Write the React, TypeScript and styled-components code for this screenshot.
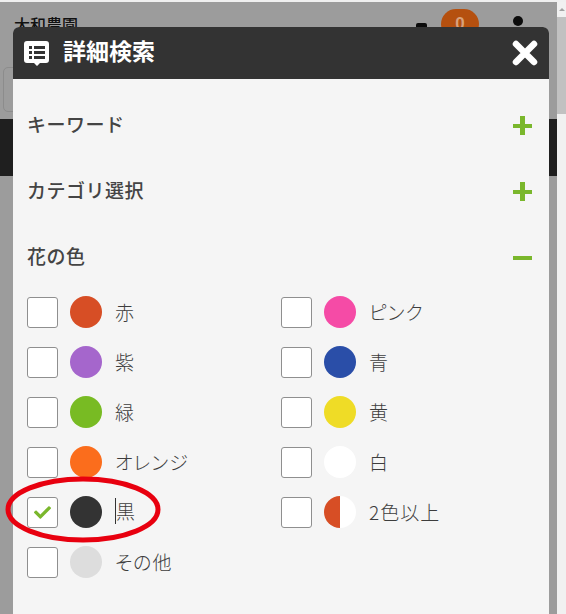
import styled, { createGlobalStyle } from "styled-components";
import { FaCheck } from "react-icons/fa";

const GlobalStyle = createGlobalStyle`
  html, body {
    margin: 0;
    padding: 0;
    overflow: hidden;
    background: #f0f0f0;
  }
  * {
    box-sizing: border-box;
  }
`;

const Page = styled.div`
  position: relative;
  width: 566px;
  height: 614px;
  padding-top: 2px;
  overflow: hidden;
  display: flex;
  font-family: "Noto Sans CJK JP", "Liberation Sans", sans-serif;
`;

const Backdrop = styled.div`
  flex: 1;
  background: #9c9c9c;
`;

const Header = styled.div`
  height: 65px;
  padding: 7px 14px 0;
  display: flex;
  align-items: flex-start;
  justify-content: space-between;
  font-size: 16px;
  font-weight: 500;
  color: #111;
`;

const ShopName = styled.span`
  margin-top: 3px;
`;

const HeaderTools = styled.div`
  display: flex;
  align-items: flex-start;
`;

const CartMark = styled.div`
  width: 11px;
  height: 12px;
  margin: 14px 14px 0 0;
  background: #0c0c0c;
  border-radius: 2px;
`;

const Badge = styled.div`
  width: 38px;
  height: 30px;
  border-radius: 15px;
  background: #b5500f;
  color: #d8a27d;
  font-family: "Liberation Sans", sans-serif;
  font-size: 17px;
  font-weight: 700;
  text-align: center;
  line-height: 30px;
`;

const UserMark = styled.div`
  width: 10px;
  height: 10px;
  margin: 7px 20px 0 34px;
  background: #0c0c0c;
  border-radius: 50%;
`;

const SearchBox = styled.div`
  height: 45px;
  margin: 0 20px 7px 3px;
  border: 1px solid #8c8c8c;
  border-radius: 5px;
`;

const NavBand = styled.div`
  height: 57px;
  background: #1f1f1f;
`;

const Scrollbar = styled.div`
  width: 9px;
  background: #f1f1f1;
  display: flex;
  flex-direction: column;
  align-items: center;
`;

const ScrollArrow = styled.div`
  margin-top: 6px;
  border-left: 3px solid transparent;
  border-right: 3px solid transparent;
  border-bottom: 3px solid #a3a3a3;
`;

const ScrollThumb = styled.div`
  margin-top: 6px;
  width: 100%;
  height: 97px;
  background: #c1c1c1;
`;

const Modal = styled.div`
  position: absolute;
  top: 27px;
  left: 13px;
  width: 536px;
  height: 600px;
  background: #f5f5f5;
  border-radius: 6px 6px 0 0;
  overflow: hidden;
`;

const TitleBar = styled.div`
  height: 52px;
  background: #333;
  display: flex;
  align-items: center;
  padding: 0 11px;
  color: #fff;
`;

const TitleText = styled.div`
  flex: 1;
  margin: -7px 0 0 13px;
  font-size: 23px;
  line-height: 34px;
  font-weight: 700;
`;

const Sections = styled.div`
  padding-top: 13px;
`;

const Section = styled.div`
  height: 66px;
  padding: 0 17px 0 14px;
  display: flex;
  align-items: center;
  justify-content: space-between;
  color: #444;
  font-size: 19px;
  letter-spacing: 0.5px;
  font-weight: 500;
`;

const SectionTitle = styled.span`
  margin-top: -3px;
`;

const Toggle = styled.div<{ $open?: boolean }>`
  position: relative;
  width: 19px;
  height: 19px;

  &::before {
    content: "";
    position: absolute;
    left: 0;
    top: 8px;
    width: 19px;
    height: 4px;
    background: #7ab72c;
  }

  &::after {
    content: "";
    display: ${(p) => (p.$open ? "none" : "block")};
    position: absolute;
    left: 7px;
    top: 0;
    width: 5px;
    height: 19px;
    background: #7ab72c;
  }
`;

const ColorGrid = styled.div`
  display: grid;
  grid-template-columns: 254px 1fr;
  grid-auto-rows: 50px;
  padding: 0 14px;
  margin-top: -3px;
`;

const ColorItem = styled.label`
  display: flex;
  align-items: center;
  color: #3d3d3d;
  font-size: 19px;
  font-weight: 300;
  letter-spacing: 1px;
  font-feature-settings: "palt";
`;

const CheckBox = styled.span`
  width: 31px;
  height: 31px;
  background: #fff;
  border: 1px solid #8f8f8f;
  border-radius: 3px;
  display: flex;
  align-items: center;
  justify-content: center;
  color: #7ab72c;
  font-size: 17px;
`;

const Swatch = styled.span<{ $color: string }>`
  width: 32px;
  height: 32px;
  margin: 0 12.7px 0 12.3px;
  border-radius: 50%;
  background: ${(p) => p.$color};
`;

const LabelText = styled.span<{ $cursor?: boolean }>`
  margin-top: -2px;
  ${(p) => p.$cursor && "border-left: 1px solid #333; line-height: 26px;"}
`;

const Annotation = styled.svg`
  position: absolute;
  left: 0;
  top: 470px;
`;

const ListIcon = () => (
  <svg width="26" height="26" viewBox="0 0 26 26">
    <path
      fill="#fff"
      fillRule="evenodd"
      d="M3 1h19a3 3 0 0 1 3 3v16a3 3 0 0 1-3 3h-6l-3 3-3-3H3a3 3 0 0 1-3-3V4a3 3 0 0 1 3-3zM5 6v3h3V6zm5 0v3h11V6zM5 11v3h3v-3zm5 0v3h11v-3zM5 16v3h3v-3zm5 0v3h11v-3z"
    />
  </svg>
);

const CloseIcon = () => (
  <svg width="26" height="26" viewBox="0 0 26 26">
    <path d="M4 4l18 18M22 4L4 22" stroke="#fff" strokeWidth="6.5" strokeLinecap="round" />
  </svg>
);

const colors = [
  { name: "赤", color: "#d74e25" },
  { name: "ピンク", color: "#f54ba6" },
  { name: "紫", color: "#a566cc" },
  { name: "青", color: "#2a4ea8" },
  { name: "緑", color: "#78bb23" },
  { name: "黄", color: "#efdc26" },
  { name: "オレンジ", color: "#fb6d1c" },
  { name: "白", color: "#ffffff" },
  { name: "黒", color: "#333333", checked: true },
  { name: "2色以上", color: "linear-gradient(90deg, #d74e25 50%, #ffffff 50%)" },
  { name: "その他", color: "#dddddd" },
];

export default function App() {
  return (
    <Page>
      <GlobalStyle />
      <Backdrop>
        <Header>
          <ShopName>大和農園</ShopName>
          <HeaderTools>
            <CartMark />
            <Badge>0</Badge>
            <UserMark />
          </HeaderTools>
        </Header>
        <SearchBox />
        <NavBand />
      </Backdrop>
      <Scrollbar>
        <ScrollArrow />
        <ScrollThumb />
      </Scrollbar>
      <Modal>
        <TitleBar>
          <ListIcon />
          <TitleText>詳細検索</TitleText>
          <CloseIcon />
        </TitleBar>
        <Sections>
          <Section>
            <SectionTitle>キーワード</SectionTitle>
            <Toggle />
          </Section>
          <Section>
            <SectionTitle>カテゴリ選択</SectionTitle>
            <Toggle />
          </Section>
          <Section>
            <SectionTitle>花の色</SectionTitle>
            <Toggle $open />
          </Section>
        </Sections>
        <ColorGrid>
          {colors.map((c) => (
            <ColorItem key={c.name}>
              <CheckBox>{c.checked && <FaCheck />}</CheckBox>
              <Swatch $color={c.color} />
              <LabelText $cursor={c.checked}>{c.name}</LabelText>
            </ColorItem>
          ))}
        </ColorGrid>
      </Modal>
      <Annotation width="170" height="80">
        <ellipse cx="83" cy="39.5" rx="75" ry="30.5" fill="none" stroke="#e8000f" strokeWidth="5" />
      </Annotation>
    </Page>
  );
}
